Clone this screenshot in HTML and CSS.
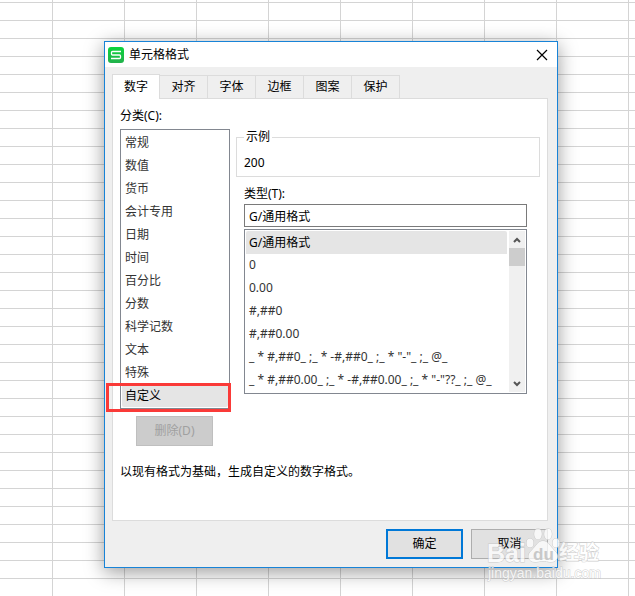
FILE: index.html
```html
<!DOCTYPE html>
<html lang="zh-CN">
<head>
    <meta charset="UTF-8">
    <meta name="viewport" content="width=device-width, initial-scale=1.0">
    <title>单元格格式</title>
    <link rel="stylesheet" href="styles.css">
</head>
<body>
    <main class="sheet">
        <section class="dialog" role="dialog" aria-labelledby="dialogTitle">
            <header class="title-bar">
                <svg class="logo" viewBox="0 0 16 16" aria-hidden="true">
                    <defs>
                        <linearGradient id="logoFill" x1="0" y1="0" x2="0" y2="1">
                            <stop offset="0" stop-color="#0ad43c"/>
                            <stop offset="1" stop-color="#22b14c"/>
                        </linearGradient>
                    </defs>
                    <rect width="16" height="16" rx="3" fill="url(#logoFill)"/>
                    <path d="M13 4.500H4.500Q3.500 4.500 3.500 5.500V7Q3.500 8 4.500 8H11.500Q12.500 8 12.500 9V10.500Q12.500 11.500 11.500 11.500H3" fill="none" stroke="#fff" stroke-width="1.3"/>
                </svg>
                <h1 id="dialogTitle">单元格格式</h1>
                <button class="close-btn" type="button" aria-label="关闭">
                    <svg viewBox="0 0 12 12"><path d="M1 1L11 11M11 1L1 11" stroke="#000" stroke-width="1.2"/></svg>
                </button>
            </header>

            <form class="dialog-body">
                <nav class="tabs" role="tablist">
                    <button type="button" role="tab" class="tab active" aria-selected="true">数字</button>
                    <button type="button" role="tab" class="tab">对齐</button>
                    <button type="button" role="tab" class="tab">字体</button>
                    <button type="button" role="tab" class="tab">边框</button>
                    <button type="button" role="tab" class="tab">图案</button>
                    <button type="button" role="tab" class="tab">保护</button>
                </nav>

                <div class="panel">
                    <div class="columns">
                        <div class="category">
                            <label for="category">分类(C):</label>
                            <div class="list-box">
                                <select id="category" size="12">
                                    <option>常规</option>
                                    <option>数值</option>
                                    <option>货币</option>
                                    <option>会计专用</option>
                                    <option>日期</option>
                                    <option>时间</option>
                                    <option>百分比</option>
                                    <option>分数</option>
                                    <option>科学记数</option>
                                    <option>文本</option>
                                    <option>特殊</option>
                                    <option selected>自定义</option>
                                </select>
                                <span class="highlight"></span>
                            </div>
                            <button class="btn delete-btn" type="button" disabled>删除(D)</button>
                        </div>

                        <div class="format">
                            <fieldset class="sample">
                                <legend>示例</legend>
                                <output>200</output>
                            </fieldset>
                            <div class="type">
                                <label for="formatType">类型(T):</label>
                                <input type="text" id="formatType" value="G/通用格式">
                                <div class="list-box">
                                    <select id="formatList" size="7" aria-label="类型">
                                        <option selected>G/通用格式</option>
                                        <option>0</option>
                                        <option>0.00</option>
                                        <option>#,##0</option>
                                        <option>#,##0.00</option>
                                        <option>_ * #,##0_ ;_ * -#,##0_ ;_ * "-"_ ;_ @_ </option>
                                        <option>_ * #,##0.00_ ;_ * -#,##0.00_ ;_ * "-"??_ ;_ @_ </option>
                                    </select>
                                    <div class="scrollbar">
                                        <button type="button" aria-label="向上">
                                            <svg viewBox="0 0 8 6"><path d="M1 5L4 2L7 5" fill="none" stroke="#555" stroke-width="2"/></svg>
                                        </button>
                                        <span class="thumb"></span>
                                        <button type="button" aria-label="向下">
                                            <svg viewBox="0 0 8 6"><path d="M1 1L4 4L7 1" fill="none" stroke="#555" stroke-width="2"/></svg>
                                        </button>
                                    </div>
                                </div>
                            </div>
                        </div>
                    </div>
                    <p class="hint">以现有格式为基础，生成自定义的数字格式。</p>
                </div>

                <footer class="actions">
                    <button class="btn primary" type="submit">确定</button>
                    <button class="btn" type="button">取消</button>
                </footer>
            </form>

            <svg class="watermark" viewBox="0 0 116 60" aria-hidden="true">
                <g class="mark">
                    <text x="0" y="37" class="mark-name">Bai</text>
                    <ellipse cx="43" cy="18" rx="3.500" ry="4.500"/>
                    <ellipse cx="51" cy="9" rx="3.800" ry="5.500"/>
                    <ellipse cx="61" cy="9" rx="3.800" ry="5.500"/>
                    <ellipse cx="69" cy="18" rx="3.500" ry="4.500"/>
                    <path d="M56 16C61 16 63 21 67 25C73 30 71 37 64 37C60 37 59 36 56 36C53 36 52 37 48 37C41 37 39 30 45 25C49 21 51 16 56 16Z"/>
                    <text x="72" y="35" class="mark-cn">经验</text>
                    <text x="1" y="53" class="mark-url">jingyan.baidu.com</text>
                </g>
                <text x="46" y="35" class="mark-du">du</text>
            </svg>
        </section>
    </main>
</body>
</html>
```
FILE: styles.css
```css
:root {
    --accent: #1883d7;
    --face: #efefef;
    --line: #dcdcdc;
    --field-line: #828790;
    --grid-line: #d4d4d4;
}

* {
    margin: 0;
    padding: 0;
    box-sizing: border-box;
}

body {
    font-family: "Noto Sans", "Noto Sans CJK SC", sans-serif;
    font-size: 12px;
    line-height: 18px;
    color: #000;
}

button, input, select {
    font: inherit;
    color: inherit;
}

/* Spreadsheet behind the dialog */
.sheet {
    min-height: 100vh;
    padding: 41px 77px 28px 104px;
    background-color: #fff;
    background-image:
        linear-gradient(var(--grid-line) 1px, transparent 1px),
        linear-gradient(90deg, var(--grid-line) 1px, transparent 1px);
    background-size: 100% 18px, 72px 100%;
    background-position: 0 2px, 52px 0;
}

.dialog {
    position: relative;
    border: 1px solid var(--accent);
    background-color: var(--face);
    box-shadow: 0 4px 18px rgba(0,0,0,0.4);
}

.title-bar {
    display: flex;
    align-items: center;
    gap: 5px;
    height: 25px;
    padding: 0 9px 0 3px;
    background-color: #fff;
}

.title-bar h1 {
    flex: 1;
    font-size: 12px;
    font-weight: normal;
}

.logo {
    width: 16px;
    height: 16px;
}

.close-btn {
    display: flex;
    border: none;
    background: none;
}

.close-btn svg {
    width: 12px;
    height: 12px;
}

.dialog-body {
    padding: 7px 9px 8px 7px;
}

/* Tabs */
.tabs {
    display: flex;
    align-items: flex-end;
}

.tab {
    width: 48px;
    height: 23px;
    border: 1px solid var(--line);
    border-left: none;
    border-bottom: none;
    background-color: var(--face);
}

.tab.active {
    height: 25px;
    margin-bottom: -1px;
    border-left: 1px solid var(--line);
    background-color: #fff;
    z-index: 1;
}

.panel {
    padding: 8px 7px 39px;
    border: 1px solid var(--line);
    background-color: #fff;
}

.columns {
    display: flex;
    gap: 6px;
}

.category {
    width: 110px;
}

.category label, .type label {
    display: block;
}

/* List boxes */
.list-box {
    position: relative;
    display: flex;
    padding: 1px;
    border: 1px solid var(--field-line);
    background-color: #fff;
}

.category .list-box {
    margin-top: 4px;
}

select {
    flex: 1;
    min-width: 0;
    border: none;
    outline: none;
    background-color: #fff;
    scrollbar-width: none;
    overflow: hidden;
}

option {
    height: 23px;
    padding: 2px 3px 0;
    line-height: 21px;
    color: #333;
}

option:checked {
    color: #000;
    background: linear-gradient(#e5e5e5, #e5e5e5);
}

.highlight {
    position: absolute;
    left: -15px;
    right: -2px;
    bottom: -4px;
    height: 29px;
    border: 3px solid #fa3a38;
    pointer-events: none;
}

.scrollbar {
    display: flex;
    flex-direction: column;
    width: 16px;
    margin-left: 2px;
    background-color: #f0f0f0;
}

.scrollbar button {
    display: flex;
    align-items: center;
    justify-content: center;
    height: 17px;
    border: none;
    background: none;
}

.scrollbar svg {
    width: 8px;
    height: 6px;
}

.scrollbar .thumb {
    height: 18px;
    margin-bottom: auto;
    background-color: #cdcdcd;
}

/* Format column */
.format {
    flex: 1;
    min-width: 0;
}

.sample {
    margin-top: 21px;
    padding: 8px 7px 4px;
    border: 1px solid var(--line);
}

.sample legend {
    padding: 0 2px;
}

.sample output {
    display: block;
}

.type {
    padding: 8px 13px 0 8px;
}

.type input {
    display: block;
    width: 100%;
    height: 23px;
    margin: 1px 0 2px;
    padding: 0 4px;
    border: 1px solid #7a7a7a;
    outline: none;
}

/* Buttons */
.btn {
    width: 77px;
    height: 30px;
    border: 1px solid #adadad;
    background-color: #e1e1e1;
}

.btn.primary {
    border: 2px solid #0078d7;
}

.delete-btn {
    margin: 7px 0 0 16px;
    border-color: #bfbfbf;
    background-color: #ccc;
    color: #a0a0a0;
}

.hint {
    margin-top: 17px;
}

.actions {
    display: flex;
    justify-content: flex-end;
    gap: 8px;
    padding-top: 8px;
}

/* Watermark */
.watermark {
    position: absolute;
    right: -46px;
    bottom: -18px;
    width: 116px;
    height: 60px;
    pointer-events: none;
}

.mark {
    fill: #fff;
    stroke: #c0c0c0;
    stroke-width: 1px;
    paint-order: stroke;
    opacity: 0.75;
}

.mark-name {
    font: bold 25px "Liberation Sans", sans-serif;
}

.mark-cn {
    font: bold 20px "Noto Sans CJK SC", sans-serif;
}

.mark-url {
    font: 14px "Liberation Sans", sans-serif;
}

.mark-du {
    font: bold 17px "Liberation Sans", sans-serif;
    fill: #c8c8c8;
}
```
